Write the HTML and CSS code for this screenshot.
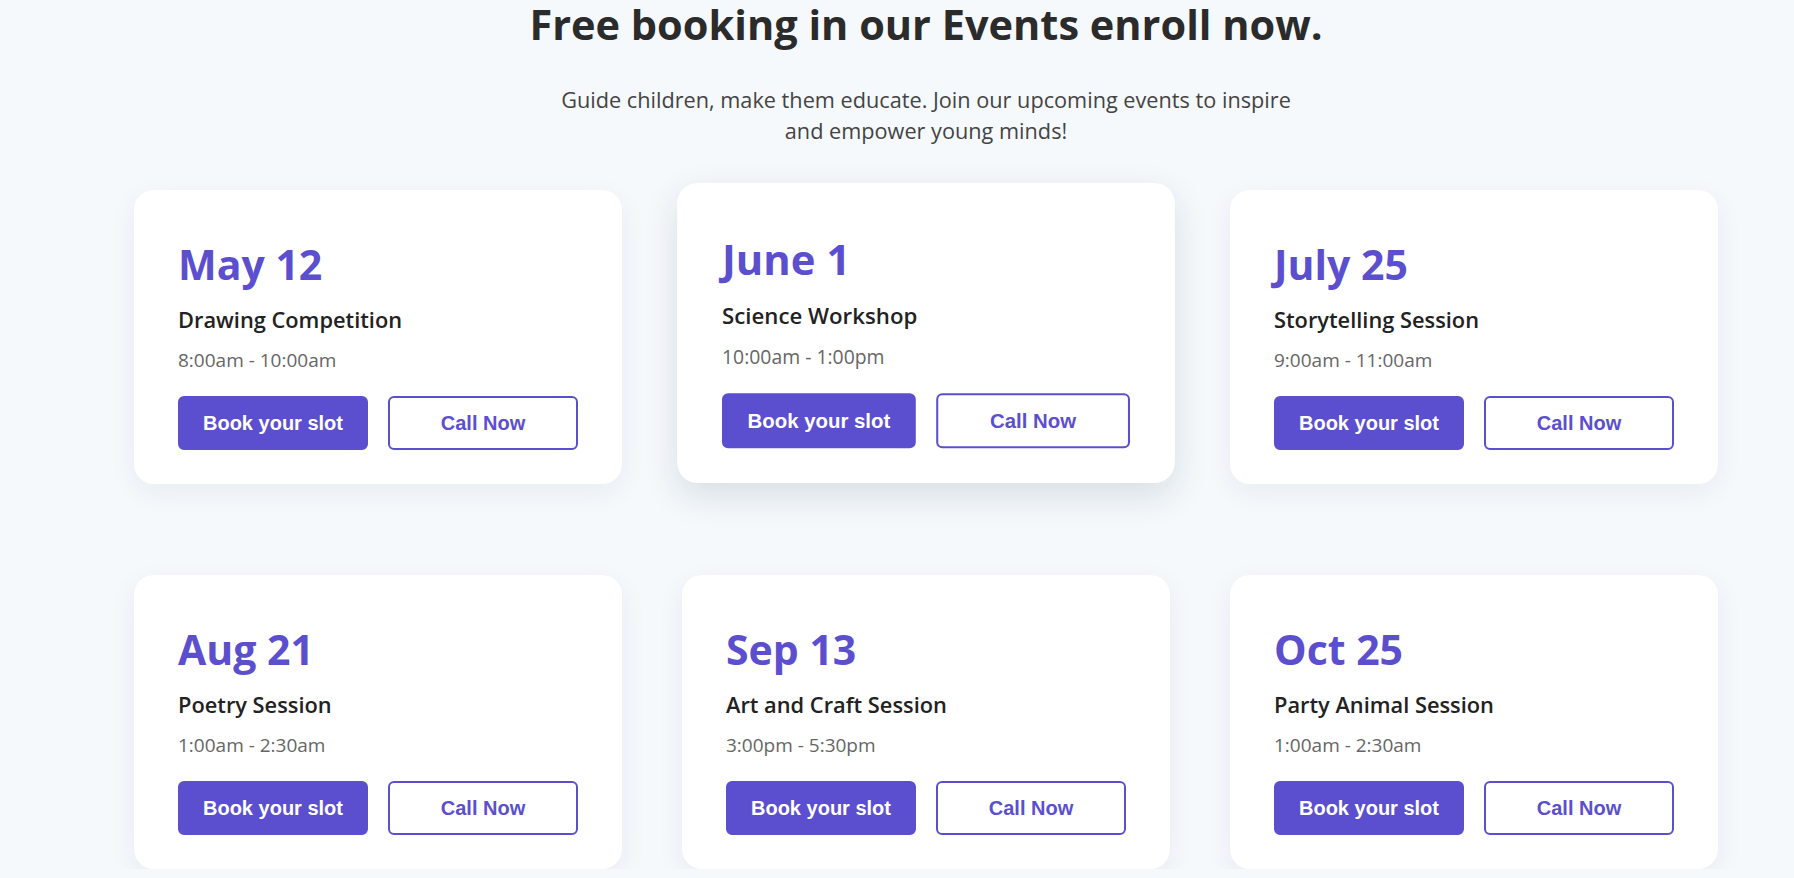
FILE: index.html
```html
<!DOCTYPE html>
<html lang="en">
<head>
<meta charset="utf-8">
<title>Events</title>
<link rel="stylesheet" href="styles.css">
</head>
<body>
<main class="page">
  <header class="intro">
    <h1 class="intro-title">Free booking in our Events enroll now.</h1>
    <p class="intro-text">Guide children, make them educate. Join our upcoming events to inspire and empower young minds!</p>
  </header>
  <section class="events">
    <article class="card">
      <h2 class="card-date">May 12</h2>
      <h3 class="card-title">Drawing Competition</h3>
      <p class="card-time">8:00am - 10:00am</p>
      <div class="card-actions"><button class="btn btn-primary">Book your slot</button><button class="btn btn-outline">Call Now</button></div>
    </article>
    <article class="card card-active">
      <h2 class="card-date">June 1</h2>
      <h3 class="card-title">Science Workshop</h3>
      <p class="card-time">10:00am - 1:00pm</p>
      <div class="card-actions"><button class="btn btn-primary">Book your slot</button><button class="btn btn-outline">Call Now</button></div>
    </article>
    <article class="card">
      <h2 class="card-date">July 25</h2>
      <h3 class="card-title">Storytelling Session</h3>
      <p class="card-time">9:00am - 11:00am</p>
      <div class="card-actions"><button class="btn btn-primary">Book your slot</button><button class="btn btn-outline">Call Now</button></div>
    </article>
    <article class="card">
      <h2 class="card-date">Aug 21</h2>
      <h3 class="card-title">Poetry Session</h3>
      <p class="card-time">1:00am - 2:30am</p>
      <div class="card-actions"><button class="btn btn-primary">Book your slot</button><button class="btn btn-outline">Call Now</button></div>
    </article>
    <article class="card">
      <h2 class="card-date">Sep 13</h2>
      <h3 class="card-title">Art and Craft Session</h3>
      <p class="card-time">3:00pm - 5:30pm</p>
      <div class="card-actions"><button class="btn btn-primary">Book your slot</button><button class="btn btn-outline">Call Now</button></div>
    </article>
    <article class="card">
      <h2 class="card-date">Oct 25</h2>
      <h3 class="card-title">Party Animal Session</h3>
      <p class="card-time">1:00am - 2:30am</p>
      <div class="card-actions"><button class="btn btn-primary">Book your slot</button><button class="btn btn-outline">Call Now</button></div>
    </article>
  </section>
</main>
</body>
</html>
```
FILE: styles.css
```css
html, body {
  margin: 0;
  padding: 0;
}
body {
  background: #f5f9fc;
  font-family: "Open Sans", "Noto Sans", sans-serif;
  color: #2b2b2b;
  overflow: hidden;
}
.page {
  padding: 0 76px 0 134px;
}
.intro {
  text-align: center;
}
.intro-title {
  margin: 0;
  font-size: 41.5px;
  line-height: 48px;
  font-weight: 700;
  color: #2b2b2b;
}
.intro-text {
  margin: 36px auto 0;
  max-width: 760px;
  font-size: 21.7px;
  line-height: 31px;
  color: #444;
}
.events {
  margin-top: 44px;
  display: grid;
  grid-template-columns: repeat(3, 1fr);
  column-gap: 60px;
  row-gap: 91px;
}
.card {
  background: #fff;
  border-radius: 20px;
  padding: 50px 44px 34px;
  height: 294px;
  box-sizing: border-box;
  box-shadow: 0 8px 28px rgba(20, 40, 80, 0.06);
}
.card-active {
  transform: translateY(-4px) scale(1.02);
  box-shadow: 0 12px 34px rgba(20, 30, 60, 0.12);
}
.card-date {
  margin: 0;
  font-size: 41px;
  line-height: 48px;
  font-weight: 700;
  color: #5b4fcf;
}
.card-title {
  margin: 18px 0 0;
  font-size: 21.8px;
  line-height: 28px;
  font-weight: 600;
  color: #222;
}
.card-time {
  margin: 13px 0 0;
  font-size: 19px;
  line-height: 26px;
  color: #666;
}
.card-actions {
  margin-top: 23px;
  display: flex;
  gap: 20px;
}
.btn {
  flex: 1;
  height: 54px;
  border: 2px solid #5b4fcf;
  border-radius: 6px;
  font-family: "Liberation Sans", Arial, sans-serif;
  font-weight: 700;
  font-size: 20px;
  cursor: pointer;
  padding: 0;
}
.btn-primary {
  background: #5b4fcf;
  color: #fff;
}
.btn-outline {
  background: #fff;
  color: #5b4fcf;
}
```
